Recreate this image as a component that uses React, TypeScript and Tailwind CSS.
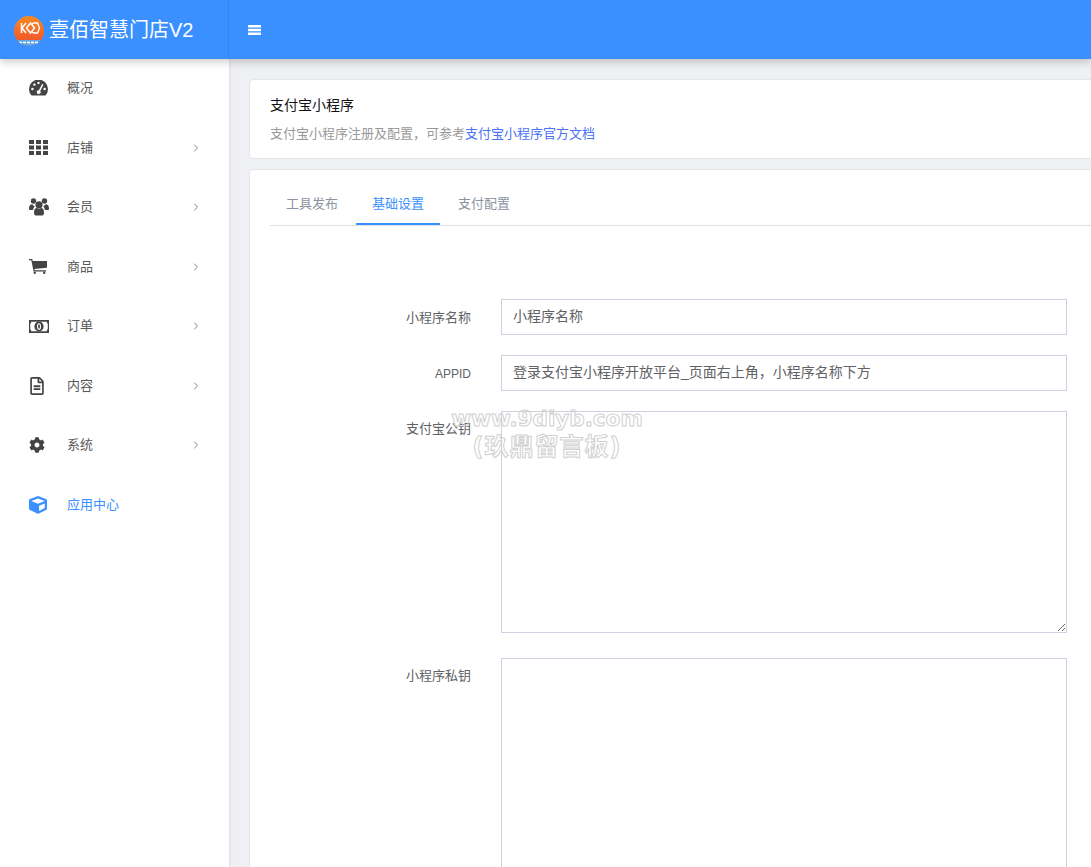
import { FaRegFileAlt, FaCog, FaCube } from "react-icons/fa";
import { ChevronRight } from "lucide-react";
import type { ReactNode } from "react";

const font = "font-['Liberation_Sans','Noto_Sans_CJK_SC',sans-serif]";

function DashboardIcon() {
  return (
    <svg viewBox="0 0 19 16" className="h-4 w-[19px] fill-[#444]">
      <path d="M2.6 15.6A9.5 9.5 0 1 1 16.4 15.6z" />
      <g fill="#fff">
        <circle cx="3.4" cy="9" r="1.2" />
        <circle cx="5.4" cy="4.6" r="1.2" />
        <circle cx="9.5" cy="2.9" r="1.2" />
        <circle cx="15.6" cy="9" r="1.2" />
        <path d="M13.2 4l1.2.7-3.2 6.2a1.9 1.9 0 1 1-1.4-.7z" />
      </g>
    </svg>
  );
}

function GridIcon() {
  return (
    <svg viewBox="0 0 19 15" className="h-[15px] w-[19px] fill-[#444]">
      {[0, 5.5, 11].map((y) =>
        [0, 7, 14].map((x) => <rect key={`${x}-${y}`} x={x} y={y} width="5" height="4" />),
      )}
    </svg>
  );
}

function UsersIcon() {
  return (
    <svg viewBox="0 0 20 18" className="h-[18px] w-5 fill-[#444]">
      <circle cx="4.5" cy="3" r="2.7" />
      <circle cx="15.5" cy="3" r="2.7" />
      <path d="M0 10.5C0 7.5 1.5 6.3 3.2 6.3c.8 1 1.7 1.7 2.6 1.9-.9 1.1-1.6 2.3-1.7 3.8H1.3C.5 12 0 11.5 0 10.5z" />
      <path d="M20 10.5c0-3-1.5-4.2-3.2-4.2-.8 1-1.7 1.7-2.6 1.9.9 1.1 1.6 2.3 1.7 3.8h2.8c.8 0 1.3-.5 1.3-1.5z" />
      <circle cx="10" cy="6.8" r="3.6" />
      <path d="M5 15c0-3.3 1-5 2.8-5 .6.5 1.3.8 2.2.8s1.6-.3 2.2-.8c1.8 0 2.8 1.7 2.8 5 0 1.7-1 2.6-2.4 2.6H7.4C6 17.6 5 16.7 5 15z" />
    </svg>
  );
}

function CartIcon() {
  return (
    <svg viewBox="0 0 18 15" className="h-[15px] w-[18px] fill-[#444]">
      <path d="M0 0h3.2l.6 2H18v6.8L5.4 10l.3 1.3h11.3v1.2H4.6L2.3 1.2H0z" />
      <circle cx="5.8" cy="13.8" r="1.2" />
      <circle cx="15.2" cy="13.8" r="1.2" />
    </svg>
  );
}

function MoneyIcon() {
  return (
    <svg viewBox="0 0 20 13" className="h-[13px] w-5">
      <path fill="#444" d="M0 0h20v13H0z" />
      <path fill="#fff" d="M2.2 1.8h15.6c0 1.3 1 2.2 1 2.2v5s-1 .9-1 2.2H2.2c0-1.3-1-2.2-1-2.2V4s1-.9 1-2.2z" />
      <ellipse cx="10" cy="6.5" rx="4.6" ry="5" fill="#444" />
      <ellipse cx="10" cy="6.5" rx="1.5" ry="2.8" fill="none" stroke="#fff" strokeWidth="1.1" />
    </svg>
  );
}

const menu: { label: string; icon: ReactNode; arrow?: boolean; active?: boolean }[] = [
  { label: "概况", icon: <DashboardIcon /> },
  { label: "店铺", icon: <GridIcon />, arrow: true },
  { label: "会员", icon: <UsersIcon />, arrow: true },
  { label: "商品", icon: <CartIcon />, arrow: true },
  { label: "订单", icon: <MoneyIcon />, arrow: true },
  { label: "内容", icon: <FaRegFileAlt className="h-[18px] w-4 text-[#444]" />, arrow: true },
  { label: "系统", icon: <FaCog className="h-4 w-4 text-[#444]" />, arrow: true },
  { label: "应用中心", icon: <FaCube className="h-[18px] w-[18px] text-[#3a90fe]" />, active: true },
];

function Logo() {
  return (
    <div className="relative mt-[2px] h-[30px] w-[30px] shrink-0 overflow-hidden rounded-full bg-gradient-to-b from-[#f98a1f] to-[#ee4a2c]">
      <svg viewBox="0 0 30 30" className="h-full w-full">
        <path d="M7.5 7v10M12 7l-4 5 4 5" fill="none" stroke="#fff" strokeWidth="1.5" />
        <path d="M12.5 12l4-5 4 5-4 5z" fill="none" stroke="#fff" strokeWidth="1.5" />
        <path d="M18 8.5L19.5 7h4l2 5-2 5h-4L18 15.5" fill="none" stroke="#fff" strokeWidth="1.3" />
        <rect x="0" y="24" width="30" height="6" fill="#5fa8e6" />
        <path d="M5 26.5h20" stroke="#fff" strokeWidth="1.5" strokeDasharray="3 1" />
      </svg>
    </div>
  );
}

function Field({ label, value, labelClass = "text-[13px]" }: { label: string; value: string; labelClass?: string }) {
  return (
    <div className="flex items-center">
      <label className={`w-[231px] pt-[1px] pr-[30px] text-right text-[#606266] ${labelClass}`}>{label}</label>
      <input
        readOnly
        value={value}
        className="h-9 w-[566px] shrink-0 border border-[#ced1de] px-[11px] pb-[5px] text-[14px] text-[#606266] outline-none"
      />
    </div>
  );
}

function TextField({ label, className }: { label: string; className: string }) {
  return (
    <div className="flex items-start">
      <label className="w-[231px] pt-[8px] pr-[30px] text-right text-[13px] text-[#606266]">{label}</label>
      <textarea readOnly className={`w-[566px] shrink-0 border border-[#ced1de] outline-none ${className}`} />
    </div>
  );
}

export default function App() {
  return (
    <div className={`flex h-screen flex-col overflow-hidden bg-[#eff0f4] ${font}`}>
      <header className="z-20 flex h-[59px] shrink-0 bg-[#3a90fe] shadow-[0_3px_8px_rgba(0,0,0,0.2)]">
        <div className="flex w-[229px] items-center gap-[5px] border-r border-[#3585ea] pl-[14px]">
          <Logo />
          <span className="text-[20px] leading-none whitespace-nowrap text-white">壹佰智慧门店V2</span>
        </div>
        <div className="flex items-center pl-[19px]">
          <svg viewBox="0 0 13 10" className="h-[10px] w-[13px] fill-white">
            <rect width="13" height="2.4" rx="0.5" />
            <rect y="3.8" width="13" height="2.4" rx="0.5" />
            <rect y="7.6" width="13" height="2.4" rx="0.5" />
          </svg>
        </div>
      </header>

      <div className="flex min-h-0 flex-1">
        <aside className="z-10 -mt-[0.6px] w-[229px] shrink-0 bg-white shadow-[1px_0_4px_rgba(0,0,0,0.08)]">
          {menu.map(({ label, icon, arrow, active }) => (
            <div
              key={label}
              className={`flex h-[59.5px] items-center pr-[27px] pl-[29px] text-[13px] ${active ? "text-[#3a90fe]" : "text-[#595959]"}`}
            >
              <span className="flex w-[38px] shrink-0">{icon}</span>
              <span className="flex-1">{label}</span>
              {arrow && <ChevronRight className="h-3 w-3 text-[#666]" strokeWidth={1.6} />}
            </div>
          ))}
        </aside>

        <main className="flex min-w-0 flex-1 flex-col gap-[10px] pt-5 pl-5">
          <section className="h-[80px] w-[880px] shrink-0 rounded-[4px] border border-[#e4e5ea] bg-white px-5 pt-[15px]">
            <h1 className="text-[14px] leading-5 font-normal text-[#111]">支付宝小程序</h1>
            <p className="mt-[9px] text-[13px] leading-5 text-[#999]">
              支付宝小程序注册及配置，可参考<a className="text-[#4a73f5]">支付宝小程序官方文档</a>
            </p>
          </section>

          <section className="relative w-[880px] flex-1 rounded-[4px] border border-[#e4e5ea] bg-white px-5 pt-[11px]">
            <nav className="flex h-[45px] w-[860px] border-b border-[#dfe0e4] text-[13px] text-[#8d93a0]">
              <span className="flex w-[86px] items-center justify-center pt-[2px] pr-[2px]">工具发布</span>
              <span className="flex w-[84px] items-center justify-center border-b-2 border-[#3a90fe] pt-[4px] text-[#3a90fe]">
                基础设置
              </span>
              <span className="flex w-[88px] items-center justify-center pt-[2px]">支付配置</span>
            </nav>

            <form className="mt-[73px] flex flex-col">
              <Field label="小程序名称" value="小程序名称" />
              <div className="h-5" />
              <Field label="APPID" value="登录支付宝小程序开放平台_页面右上角，小程序名称下方" labelClass="text-[12px]" />
              <div className="h-5" />
              <TextField label="支付宝公钥" className="h-[222px] resize-y" />
              <div className="h-[25px]" />
              <TextField label="小程序私钥" className="h-[300px] resize-y" />
            </form>

            <div className="absolute top-[235px] left-[197px] w-[200px] text-center font-['DejaVu_Sans','Noto_Sans_CJK_SC',sans-serif] text-transparent [-webkit-text-stroke:1px_#d0d0d0]">
              <div className="-mx-4 text-[21.5px] leading-[28px] font-bold whitespace-nowrap">www.9diyb.com</div>
              <div className="-mx-4 text-[24px] leading-[29px] font-bold tracking-[1px] whitespace-nowrap">(玖鼎留言板)</div>
            </div>
          </section>
        </main>
      </div>
    </div>
  );
}
